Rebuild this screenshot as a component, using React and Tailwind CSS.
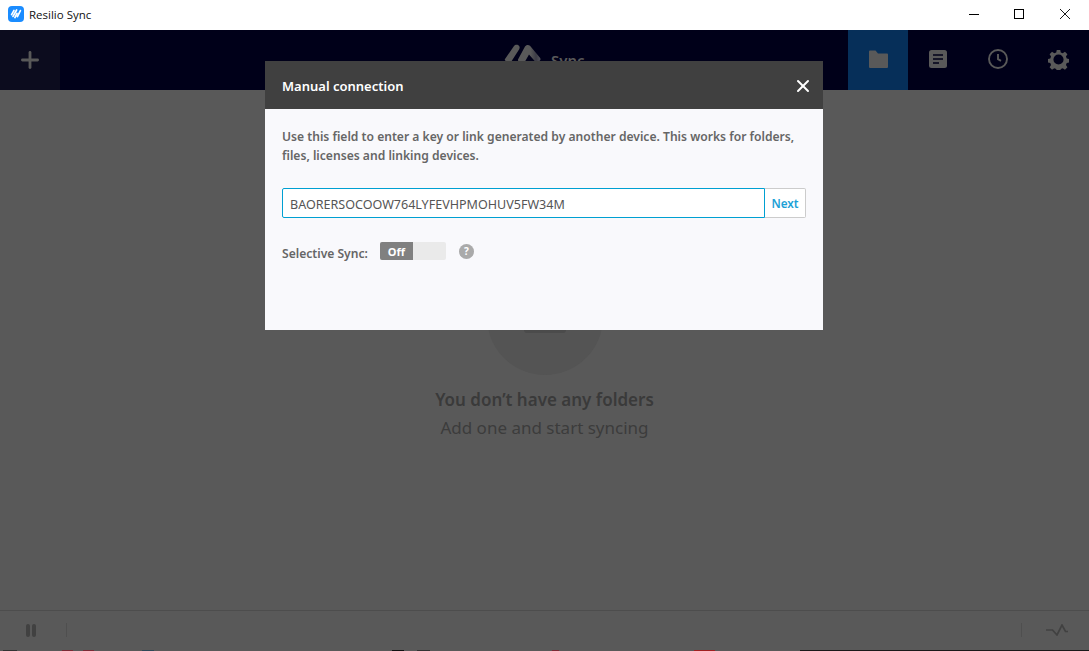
import React from 'react';
import { X, Plus } from 'lucide-react';

const Logo = ({ className }) => (
  <svg viewBox="0 0 16 16" className={className}>
    <rect width="16" height="16" rx="4" fill="#1a8cff" />
    <path d="M6 4.4 3.6 8.6M8.6 4 5 10.4M9 7.4 6.9 11.6M12.4 4.6 9.4 10.6" stroke="#fff" strokeWidth="1.7" strokeLinecap="round" fill="none" />
  </svg>
);

const NavTab = ({ active, children }) => (
  <div className={`w-[60px] h-full flex items-center justify-center pb-[2px] ${active ? 'bg-[#062f59]' : ''}`}>
    {children}
  </div>
);

// bits of the window behind, one pixel showing under the app
const strip = [
  { w: 3, c: 'bg-[#595959]' }, { w: 14, c: 'bg-[#333333]' }, { w: 45, c: 'bg-[#595959]' }, { w: 11, c: 'bg-[#7a2a35]' },
  { w: 10, c: 'bg-[#595959]' }, { w: 11, c: 'bg-[#7a2a35]' }, { w: 48, c: 'bg-[#595959]' }, { w: 12, c: 'bg-[#2f4858]' },
  { w: 238, c: 'bg-[#595959]' }, { w: 12, c: 'bg-[#111111]' }, { w: 13, c: 'bg-[#595959]' }, { w: 13, c: 'bg-[#333333]' },
  { w: 122, c: 'bg-[#595959]' }, { w: 7, c: 'bg-[#7a2a35]' }, { w: 135, c: 'bg-[#595959]' }, { w: 21, c: 'bg-[#a02020]' },
  { w: 85, c: 'bg-[#595959]' }, { w: 289, c: 'bg-[#1a1a1a]' },
];

const App = () => {
  return (
    <div className="relative w-[1089px] h-[651px] overflow-hidden bg-[#595959] font-['Noto_Sans',sans-serif]">
      {/* window title bar */}
      <div className="h-[30px] bg-white flex items-center pl-2">
        <Logo className="w-4 h-4 mb-[2px]" />
        <span className="ml-[5px] text-[11.5px] text-[#111] font-['Open_Sans',sans-serif]">Resilio Sync</span>
        <div className="ml-auto flex items-center h-full pb-[2px] text-black">
          <div className="w-[45px] flex justify-center">
            <svg width="10" height="10" viewBox="0 0 10 10" stroke="currentColor" shapeRendering="crispEdges"><path d="M0 5.5h10" /></svg>
          </div>
          <div className="w-[45px] flex justify-center">
            <svg width="10" height="10" viewBox="0 0 10 10" fill="none" stroke="currentColor" shapeRendering="crispEdges"><rect x="0.5" y="0.5" width="9" height="9" /></svg>
          </div>
          <div className="w-[47px] flex justify-center pl-[1px] mr-[1px]">
            <svg width="10" height="10" viewBox="0 0 10 10" stroke="currentColor" strokeWidth="0.9"><path d="M0 0l10 10M10 0 0 10" /></svg>
          </div>
        </div>
      </div>

      {/* app header */}
      <div className="h-[60px] bg-[#000019] flex items-center">
        <div className="w-[60px] h-full bg-[#0c0c1e] flex items-center justify-center pb-[1px]">
          <Plus size={26} strokeWidth={2.6} className="text-[#595959]" />
        </div>
        <div className="flex-1 h-full flex items-start pl-[444px] pt-[14px]">
          <svg viewBox="0 0 37 20" className="w-[37px] h-[20px]">
            <defs>
              <linearGradient id="logoFade" x1="0" y1="0" x2="1" y2="0">
                <stop offset="0" stopColor="#595959" />
                <stop offset="0.55" stopColor="#595959" />
                <stop offset="0.8" stopColor="#3c3c46" />
                <stop offset="1" stopColor="#55555c" />
              </linearGradient>
            </defs>
            <path d="M1 15 10 2c1-1.4 3-1.6 4.4-.8 1.4 1 1.6 2.6.8 4L8 16.6c-1 1.6-3 1.6-4.6 1C1 16.6.4 16 1 15z" fill="#595959" />
            <path d="M14 15.6 21 2.6c1-1.8 3.4-2.2 5-.8l10 12c1 1.2.6 2.6-.6 3.2L32 18.6l-7-8-4 7c-1 1.4-3 1.6-4.6.8-1.8-.8-2.8-1.6-2.4-2.8z" fill="url(#logoFade)" />
          </svg>
          <span className="ml-[10px] mt-[6px] text-[15px] leading-[20px] font-semibold text-[#595959]">Sync</span>
        </div>
        <div className="flex h-full mr-[1px]">
          <NavTab active>
            <svg viewBox="0 0 20 18" className="w-5 h-[18px] mr-[1px]"><path d="M1 1.5A1 1 0 0 1 2 .5h5.5l2.5 3h9a1 1 0 0 1 1 1V17a1 1 0 0 1-1 1H2a1 1 0 0 1-1-1z" fill="#595959" /></svg>
          </NavTab>
          <NavTab>
            <svg viewBox="0 0 18 18" className="w-[18px] h-[18px]">
              <rect width="18" height="18" rx="2.5" fill="#595959" />
              <path d="M4 5h10M4 9h10M4 13h6" stroke="#000019" strokeWidth="1.7" />
            </svg>
          </NavTab>
          <NavTab>
            <svg viewBox="0 0 20 20" className="w-5 h-5" fill="none" stroke="#595959">
              <circle cx="10" cy="10" r="9" strokeWidth="1.9" />
              <path d="M10 5v5.2l3 1.6" strokeWidth="1.9" />
            </svg>
          </NavTab>
          <NavTab>
            <svg viewBox="0 0 24 24" className="w-[21px] h-[21px]" fill="#595959">
              <path fillRule="evenodd" d="M10 1h4l.6 3 2.2.9 2.6-1.7 2.8 2.8-1.7 2.6.9 2.2 3 .6v4l-3 .6-.9 2.2 1.7 2.6-2.8 2.8-2.6-1.7-2.2.9-.6 3h-4l-.6-3-2.2-.9-2.6 1.7-2.8-2.8 1.7-2.6-.9-2.2-3-.6v-4l3-.6.9-2.2-1.7-2.6 2.8-2.8 2.6 1.7 2.2-.9zM12 6.2a5.8 5.8 0 1 0 0 11.6 5.8 5.8 0 0 0 0-11.6z" />
            </svg>
          </NavTab>
        </div>
      </div>

      {/* empty state behind dialog */}
      <div className="h-[520px] flex flex-col items-center">
        <div className="mt-[169px] w-[116px] h-[116px] rounded-full bg-[#545454] flex justify-center">
          <div className="mt-[61px] w-[42px] h-[13px] rounded-b-[3px] bg-[#4b4b4b]" />
        </div>
        <div className="mt-[13px] text-[17px] leading-[24px] font-semibold text-[#3a3a3a]">You don&rsquo;t have any folders</div>
        <div className="mt-[4px] text-[17px] leading-[24px] text-[#3c3c3c]">Add one and start syncing</div>
      </div>

      {/* status bar */}
      <div className="h-[40px] border-t border-[#4d4d4d] flex items-center pb-[1px]">
        <div className="ml-[26px] flex gap-[2px]">
          <div className="w-[4px] h-[13px] rounded-sm bg-[#414141]" />
          <div className="w-[4px] h-[13px] rounded-sm bg-[#414141]" />
        </div>
        <div className="ml-[30px] w-px h-[14px] bg-[#4f4f4f]" />
        <div className="ml-auto w-px h-[14px] bg-[#4f4f4f]" />
        <svg viewBox="0 0 22 12" className="ml-[24px] mr-[21px] w-[22px] h-[12px]" fill="none" stroke="#414141" strokeWidth="1.7">
          <path d="M0 6h6.5l4.5 5 5-10 3.5 6.5H22" />
        </svg>
      </div>
      <div className="h-px flex">
        {strip.map((s, i) => (
          <div key={i} className={`h-px ${s.c}`} style={{ width: s.w }} />
        ))}
      </div>

      {/* dialog */}
      <div className="absolute left-[265px] top-[61px] w-[558px] h-[269px] bg-[#f9f9fc] flex flex-col">
        <div className="h-[48px] bg-[#404040] flex items-center justify-between pl-[17px] pr-[10px] pt-[2px]">
          <span className="mt-[2px] text-[13px] font-semibold text-white">Manual connection</span>
          <X size={20} strokeWidth={2.4} className="text-white" />
        </div>
        <div className="px-[17px] pt-[18px]">
          <p className="text-[12.12px] leading-[19px] font-semibold text-[#666666] whitespace-nowrap">
            Use this field to enter a key or link generated by another device. This works for folders,<br />
            files, licenses and linking devices.
          </p>
          <div className="mt-[23px] flex h-[30px]">
            <div className="w-[483px] border border-[#00a0d2] rounded-l-[2px] bg-white flex items-center pl-[7px] pt-[4px] text-[12.55px] text-[#555]">
              BAORERSOCOOW764LYFEVHPMOHUV5FW34M
            </div>
            <div className="w-[41px] border border-l-0 border-[#ccc] rounded-r-[2px] bg-white flex items-center justify-center pt-[1px] text-[11.7px] font-semibold text-[#1ba1d6]">
              Next
            </div>
          </div>
          <div className="mt-[24px] flex items-start">
            <span className="mt-[3px] text-[12.1px] leading-[18px] font-semibold text-[#666666]">Selective Sync:</span>
            <div className="ml-[12px] w-[66px] h-[18px] rounded-[2px] bg-[#eaeaea] flex">
              <div className="w-[33px] h-full rounded-l-[2px] bg-[#808080] flex items-center justify-center pt-[2px] text-[11px] font-bold text-white">Off</div>
            </div>
            <div className="ml-[13px] mt-[2px] w-[15px] h-[15px] rounded-full bg-[#aaaaaa] flex items-center justify-center text-[10px] font-bold text-white">?</div>
          </div>
        </div>
      </div>
    </div>
  );
};

export default App;
